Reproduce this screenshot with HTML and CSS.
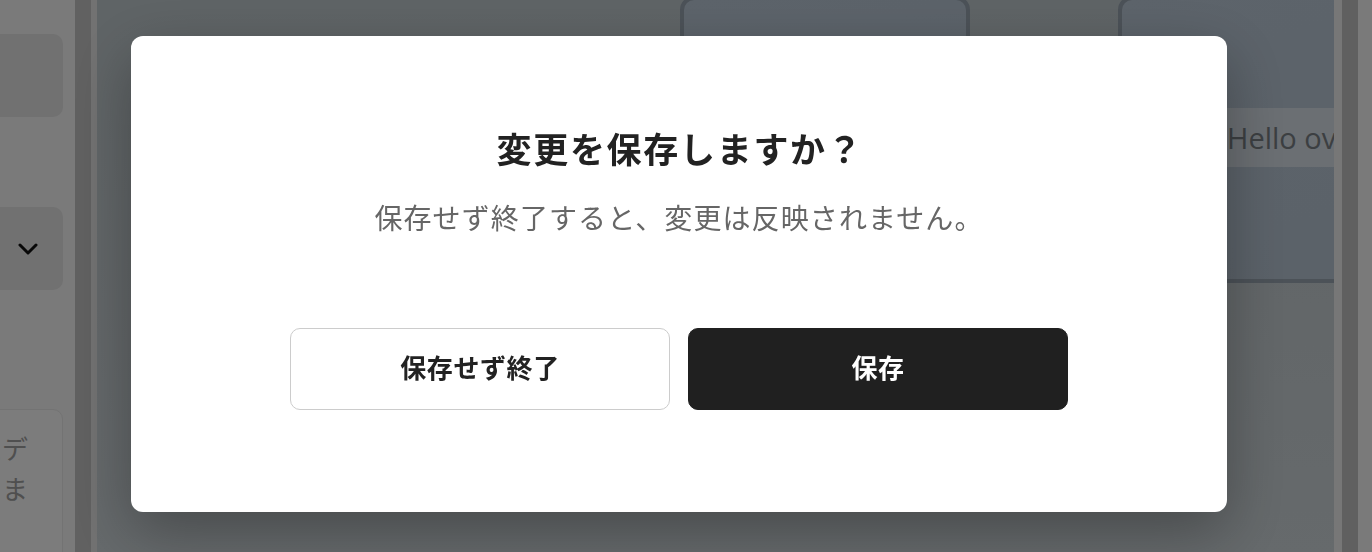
FILE: index.html
```html
<!DOCTYPE html>
<html lang="ja">
<head>
<meta charset="utf-8">
<title>変更を保存しますか？</title>
<link rel="stylesheet" href="styles.css">
</head>
<body>
<div class="app">
  <aside class="sidebar">
    <div class="side-card first"></div>
    <div class="side-card select">
      <svg class="chevron" width="20" height="12" viewBox="0 0 20 12"><polyline points="2,2 10,10 18,2" fill="none" stroke="#111" stroke-width="3" stroke-linecap="round" stroke-linejoin="round"/></svg>
    </div>
    <div class="side-card note">
      <p>保存されたデ</p>
      <p>ータがありま</p>
    </div>
  </aside>
  <div class="divider"></div>
  <main class="main">
    <div class="cards">
      <div class="card"></div>
      <div class="card">
        <div class="band"><span>Hello over there</span></div>
      </div>
    </div>
  </main>
  <div class="rail">
    <div class="rail-a"></div>
    <div class="rail-b"></div>
    <div class="rail-c"></div>
  </div>
</div>

<div class="overlay">
  <div class="modal" role="dialog">
    <h2 class="modal-title">変更を保存しますか？</h2>
    <p class="modal-text">保存せず終了すると、変更は反映されません。</p>
    <div class="modal-actions">
      <button class="btn btn-outline">保存せず終了</button>
      <button class="btn btn-solid">保存</button>
    </div>
  </div>
</div>
</body>
</html>
```

FILE: styles.css
```css
* { box-sizing: border-box; }
html, body {
  margin: 0;
  padding: 0;
  width: 1372px;
  height: 552px;
  overflow: hidden;
  font-family: "Noto Sans CJK JP", "Noto Sans", sans-serif;
}

.app {
  display: flex;
  width: 1372px;
  height: 552px;
  overflow: hidden;
}

.sidebar {
  width: 75px;
  flex: none;
  background: #f4f4f4;
  overflow: hidden;
  padding-top: 34px;
}
.side-card {
  width: 103px;
  margin-left: -40px;
  background: #e2e2e2;
  border-radius: 10px;
}
.side-card.first { height: 83px; }
.side-card.select {
  height: 83px;
  margin-top: 90px;
  display: flex;
  align-items: center;
  justify-content: flex-end;
  padding-right: 25px;
}
.side-card.note {
  width: 303px;
  margin-left: -240px;
  margin-top: 119px;
  height: 200px;
  background: #f8f8f8;
  border: 1px solid #e6e6e6;
  text-align: right;
  padding: 18px 34px 0 0;
  color: #9e9e9e;
  font-size: 26px;
  line-height: 40px;
  white-space: nowrap;
}
.side-card.note p { margin: 0; }

.divider {
  width: 22px;
  flex: none;
  background: #c2c2c2;
  border-right: 6px solid #e4e4e4;
}

.main {
  flex: 1;
  overflow: hidden;
  background: linear-gradient(180deg, #bec8cc 0%, #c6ced2 55%, #ccd4d8 100%);
}
.cards {
  display: flex;
  gap: 148px;
  padding-left: 583px;
  margin-top: -4px;
}
.card {
  width: 290px;
  height: 287px;
  flex: none;
  border: 4px solid #98a4b0;
  border-radius: 14px;
  background: linear-gradient(160deg, #bac8d6, #b6c4d2);
  overflow: hidden;
}
.card .band {
  margin-top: 108px;
  height: 59px;
  background: #d6dee6;
  display: flex;
  align-items: center;
  padding-left: 105px;
  font-family: "Open Sans", "DejaVu Sans", sans-serif;
  font-size: 29px;
  color: #787e84;
  white-space: nowrap;
}

.rail {
  display: flex;
  flex: none;
}
.rail-a { width: 8px; background: #eeeeee; }
.rail-b { width: 16px; background: #c0c0c0; }
.rail-c { width: 14px; background: #f4f4f4; }

.overlay {
  position: fixed;
  inset: 0;
  background: rgba(0, 0, 0, 0.5);
  display: flex;
  align-items: center;
  justify-content: center;
  padding: 0 14px 4px 0;
}

.modal {
  width: 1096px;
  height: 476px;
  background: #ffffff;
  border-radius: 12px;
  box-shadow: 0 20px 60px rgba(0, 0, 0, 0.3);
  display: flex;
  flex-direction: column;
  align-items: center;
  padding-top: 87px;
}
.modal-title {
  margin: 0;
  padding-left: 2px;
  font-size: 35px;
  line-height: 50px;
  font-weight: 700;
  color: #222222;
  letter-spacing: 1.7px;
}
.modal-text {
  margin: 24px 0 0;
  font-size: 28px;
  line-height: 40px;
  color: #666666;
  letter-spacing: 1.1px;
}
.modal-actions {
  margin-top: 91px;
  display: flex;
  gap: 18px;
}
.btn {
  width: 380px;
  height: 82px;
  border-radius: 10px;
  font-family: "Noto Sans CJK JP", "Noto Sans", sans-serif;
  font-size: 26px;
  font-weight: 700;
  letter-spacing: 0.6px;
  line-height: 1;
  padding: 0 0 4px;
  cursor: pointer;
}
.btn-outline {
  background: #ffffff;
  border: 1px solid #cccccc;
  color: #222222;
}
.btn-solid {
  background: #202020;
  border: 1px solid #202020;
  color: #ffffff;
}
```
